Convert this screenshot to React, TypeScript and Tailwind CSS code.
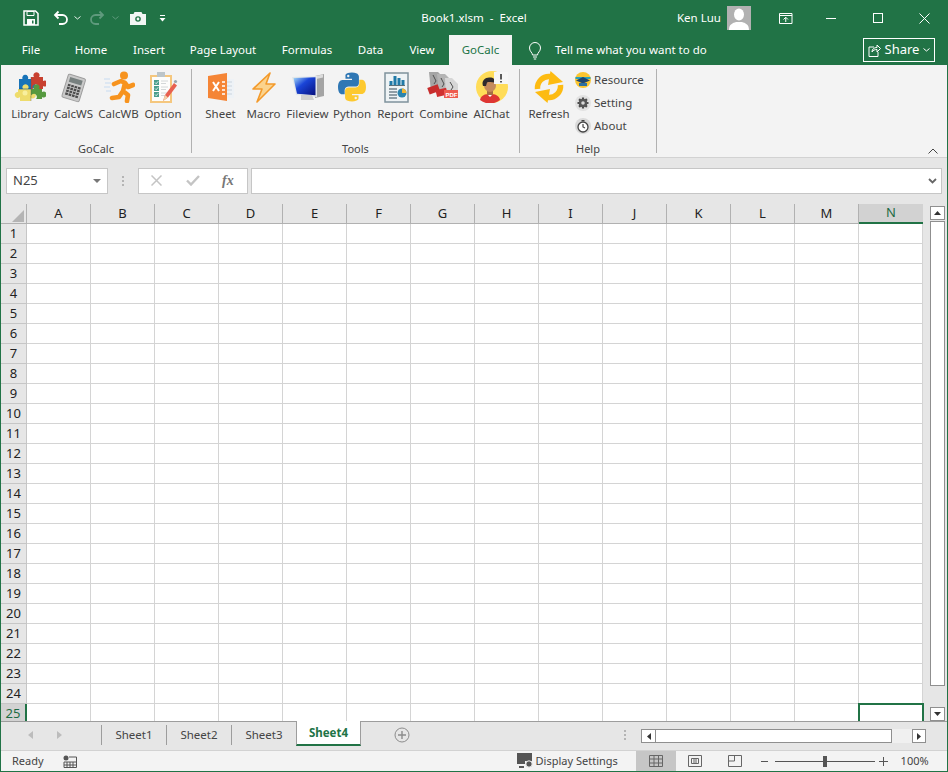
import type { ReactNode } from "react";

const font = "font-['Noto_Sans','Open_Sans',sans-serif]";

const tabs = [
  { label: "File", w: "w-[60px]" },
  { label: "Home", w: "w-[60px]" },
  { label: "Insert", w: "w-[56px]" },
  { label: "Page Layout", w: "w-[92px]" },
  { label: "Formulas", w: "w-[76px]" },
  { label: "Data", w: "w-[51px]" },
  { label: "View", w: "w-[52px]" },
];

const columns = ["A", "B", "C", "D", "E", "F", "G", "H", "I", "J", "K", "L", "M", "N"];
const rows = Array.from({ length: 25 }, (_, i) => i + 1);

function Icon({ children, size = 32 }: { children: ReactNode; size?: number }) {
  return (
    <svg width={size} height={size} viewBox={`0 0 ${size} ${size}`} fill="none" className="shrink-0">
      {children}
    </svg>
  );
}

const LibraryIcon = () => (
  <Icon>
    <path d="M5 8h3.500a3 3 0 1 1 5.500 0H17v4a3 3 0 1 1 0 5v1H5z" fill="#1773b8" />
    <path d="M17 6h3a3 3 0 1 1 5 0h4v4a3 3 0 1 1 0 5v3h-5a3 3 0 1 0-5 0h-2z" fill="#c8402f" />
    <path d="M4 18h5a3 3 0 1 1 5 0h3v4a3 3 0 1 1 0 5v3H6v-4a3 3 0 1 1-2-5z" fill="#eedc6c" />
    <path d="M17 18h3a3 3 0 1 1 5 0h3v3a3 3 0 1 1 0 5v2h-6a3 3 0 1 0-5-1z" fill="#56993f" />
    <path d="M5 18h12" stroke="#0c4f85" strokeWidth="0.600" />
    <path d="M17 6v24" stroke="#555" strokeWidth="0.400" />
    <circle cx="11" cy="22" r="2.500" fill="#f8ef9e" />
  </Icon>
);

const CalcWsIcon = () => (
  <Icon>
    <g transform="rotate(17 16 16)">
      <rect x="7" y="5" width="18" height="24" rx="1.500" fill="#c9c9c9" stroke="#9d9d9d" />
      <rect x="9.500" y="7.500" width="13" height="5" fill="#77807f" />
      {[14.5, 17.5, 20.5, 23.5].map((y) =>
        [9.5, 13, 16.5, 20].map((x) => (
          <rect key={`${x}-${y}`} x={x} y={y} width="2.700" height="2.200" fill="#4c4c4c" />
        )),
      )}
    </g>
  </Icon>
);

const CalcWbIcon = () => (
  <Icon>
    <path d="M1 8h6M2 12h6M1 16h6M3 20h5" stroke="#d6e4f2" strokeWidth="1.600" />
    <circle cx="21" cy="4.500" r="4" fill="#f7931e" />
    <path d="M11 13l7-3 4 2-2 8 5 4-1 6M20 20l-4 6-7 1M22 12l3 4 5-2" stroke="#f7931e" strokeWidth="4.600" strokeLinejoin="round" strokeLinecap="round" />
  </Icon>
);

const OptionIcon = () => (
  <Icon>
    <rect x="3" y="4" width="22" height="28" fill="#f5c77e" />
    <rect x="5" y="6" width="18" height="24" fill="#fdfdfb" />
    <rect x="10" y="1" width="8" height="5" fill="#bcc5c9" />
    {[9, 15, 21].map((y) => (
      <g key={y}>
        <rect x="7" y={y} width="5" height="5" fill="#4b9e8c" />
        <path d={`M8 ${y + 2.5}l1.200 1.200 2-2.400`} stroke="#fff" strokeWidth="0.800" />
        <path d={`M14 ${y + 1}h7M14 ${y + 3.5}h5`} stroke="#d4d8d8" />
      </g>
    ))}
    <path d="M16 30l2-6 9-12 3 2.500-9 12z" fill="#e8604f" />
    <path d="M16 30l2-6 3 2.500z" fill="#f1d2a8" />
    <circle cx="28.500" cy="10.500" r="1.600" fill="#9aa5ab" />
  </Icon>
);

const SheetIcon = () => (
  <Icon>
    <rect x="16" y="8" width="13" height="19" fill="#eef2f6" />
    <path d="M20 11h7M20 15h7M20 19h7M20 23h7" stroke="#d6dee6" strokeWidth="1.600" />
    <path d="M3 5l19-3v28L3 27z" fill="#f58536" />
    <path d="M8 11l6 9M14 11l-6 9" stroke="#fff" strokeWidth="2" />
    <path d="M17 11h3M17 15h3M17 19h3M17 23h3" stroke="#fff" strokeWidth="1.600" />
  </Icon>
);

const MacroIcon = () => (
  <Icon>
    <path d="M22 2L5 18h9l-5 13 18-18h-9z" fill="#fbd38d" stroke="#f39a2b" strokeWidth="1.600" strokeLinejoin="round" />
  </Icon>
);

const FileviewIcon = () => (
  <Icon>
    <defs>
      <linearGradient id="screen" x1="0" y1="0" x2="1" y2="1">
        <stop offset="0" stopColor="#a8dcf8" />
        <stop offset="0.4" stopColor="#1a45d8" />
        <stop offset="1" stopColor="#07107e" />
      </linearGradient>
    </defs>
    <path d="M23 5l9-2v22l-9 2z" fill="#a4a4a4" />
    <path d="M24 5l7-1.500v3L24 8z" fill="#dcdcdc" />
    <path d="M0 6l25-1v21L4 24z" fill="#e3e7ea" />
    <path d="M1.500 7l22-.7v18L5 22.700z" fill="url(#screen)" />
    <path d="M9 24h11l2 5H9z" fill="#cfcfcf" />
  </Icon>
);

const PythonIcon = () => (
  <Icon>
    <g transform="scale(1.333)">
      <path d="M11.900 1.200C6.800 1.200 7.100 3.500 7.100 3.500v2.400h4.900v.8H5.200S1.500 6.200 1.500 12s3.100 5.500 3.100 5.500h1.900v-2.700s-.1-3.100 3-3.100h5c2.800 0 2.700-2.700 2.700-2.700V4.400s.4-3.200-5.300-3.200zM9.200 2.800a.9.9 0 1 1 0 1.800.9.9 0 0 1 0-1.800z" fill="#2f77b4" />
      <path transform="rotate(180 12 12)" d="M11.900 1.200C6.800 1.200 7.100 3.500 7.100 3.500v2.400h4.900v.8H5.200S1.500 6.200 1.500 12s3.100 5.500 3.100 5.500h1.900v-2.700s-.1-3.100 3-3.100h5c2.800 0 2.700-2.700 2.700-2.700V4.400s.4-3.200-5.300-3.200zM9.200 2.800a.9.9 0 1 1 0 1.800.9.9 0 0 1 0-1.800z" fill="#fdc92f" />
    </g>
  </Icon>
);

const ReportIcon = () => (
  <Icon>
    <rect x="5" y="2" width="23" height="29" fill="#eef3f5" stroke="#7f929c" strokeWidth="1.500" />
    <path d="M11 14V10M15 14V5M19 14V7M23 14V9" stroke="#1f7aa8" strokeWidth="3" />
    <path d="M9 14.500h16" stroke="#5c6f78" />
    <path d="M9 18h8M9 21h8M9 24h8M9 27h8" stroke="#71838c" strokeWidth="1.300" />
    <circle cx="22" cy="22" r="4.500" fill="#2b85ae" />
    <path d="M22 22v-4.500a4.500 4.500 0 0 1 4.500 4.500z" fill="#f2b632" />
  </Icon>
);

const CombineIcon = () => (
  <Icon size={36}>
    <path d="M3 3h9l4 4v16H5z" fill="#a4a4a4" />
    <path d="M11 5h8l5 5v14H13z" fill="#b4b4b4" />
    <path d="M19 9h7l6 6v14H20z" fill="#d6d6d6" />
    <path d="M7 6l3 6-2 3M15 9l3 6-2 3M24 13l3 5-2 3" stroke="#4f4f4f" />
    <rect x="2" y="17" width="11" height="7" transform="rotate(-20 7 20)" fill="#c72d2d" />
    <rect x="10" y="20" width="11" height="7" transform="rotate(-14 15 23)" fill="#cf3030" />
    <rect x="18" y="21" width="14" height="8" fill="#ee5c4f" />
    <text x="19.500" y="27.500" fontSize="6" fill="#fff" fontFamily="Liberation Sans, sans-serif" fontWeight="700">PDF</text>
  </Icon>
);

const AiChatIcon = () => (
  <Icon>
    <circle cx="16" cy="16" r="16" fill="#ffdc58" />
    <path d="M4 29c1-5 5-6 10-6s9 1 10 6a16 16 0 0 1-20 0z" fill="#de3633" />
    <path d="M11 23l3 3 3-3z" fill="#fff" />
    <rect x="11" y="18" width="6" height="6" fill="#a76c45" />
    <ellipse cx="14" cy="14.500" rx="6" ry="6.500" fill="#c58a5c" />
    <path d="M7 15c-2-6 3-9 7-8.500 3 0 6 2 6 5-4 0-7-1-9 0l-1 3.500z" fill="#2e2a2d" />
    <rect x="18" y="1" width="14" height="12" fill="#f6f6f6" />
    <path d="M25 3v5.500M25 10v1.500" stroke="#333" strokeWidth="1.600" />
  </Icon>
);

const RefreshIcon = () => (
  <Icon>
    <path d="M4.500 18A11.500 11.500 0 0 1 17 5.500" stroke="#fdbb11" strokeWidth="5.500" />
    <path d="M17.500 0L30 11l-15 3z" fill="#fdbb11" />
    <path d="M27.500 14A11.500 11.500 0 0 1 15 26.500" stroke="#fdbb11" strokeWidth="5.500" />
    <path d="M14.500 32L2 21l15-3z" fill="#fdbb11" />
  </Icon>
);

const ResourceIcon = () => (
  <Icon size={16}>
    <circle cx="8" cy="8" r="8" fill="#fbc530" />
    <path d="M0.500 5h15v2h-15z" fill="#29a1bd" />
    <path d="M1 8.500L8 5l7 3.500-7 3z" fill="#20456e" />
    <path d="M4 11h8v3H4z" fill="#2e6f9f" />
  </Icon>
);

const SettingIcon = () => (
  <Icon size={16}>
    <circle cx="8" cy="8" r="8" fill="#e2e2e2" />
    <path d="M8 2.500v11M2.500 8h11M4.100 4.100l7.800 7.800M11.900 4.100l-7.800 7.800" stroke="#4c4c4c" strokeWidth="2.200" />
    <circle cx="8" cy="8" r="4.300" fill="#555" />
    <circle cx="8" cy="8" r="1.800" fill="#d8d8d8" />
  </Icon>
);

const AboutIcon = () => (
  <Icon size={16}>
    <circle cx="8" cy="8" r="8" fill="#dadada" />
    <circle cx="8" cy="9" r="5" fill="#fff" stroke="#444" strokeWidth="1.300" />
    <path d="M6.500 2.700h3M8 6v3l2 1" stroke="#444" strokeWidth="1.200" />
  </Icon>
);

function RibbonButton({ label, width, children }: { label: string; width: string; children: ReactNode }) {
  return (
    <div className={`${width} flex shrink-0 flex-col items-center`}>
      <div className="flex h-[36px] items-center justify-center">{children}</div>
      <div className="mt-[1px] whitespace-nowrap text-[11.5px] leading-[16px] text-[#444]">{label}</div>
    </div>
  );
}

function SmallButton({ label, children }: { label: string; children: ReactNode }) {
  return (
    <div className="flex h-[23px] items-center gap-[3px]">
      {children}
      <span className="text-[11.5px] text-[#444]">{label}</span>
    </div>
  );
}

function Group({ label, width, children }: { label: string; width: string; children: ReactNode }) {
  return (
    <div className={`${width} mb-[4px] flex shrink-0 flex-col border-r border-[#b1b1b1]`}>
      <div className="flex h-[70px] shrink-0 items-start">{children}</div>
      <div className="mt-[3px] h-[11px] text-center text-[11px] leading-[14px] text-[#444]">{label}</div>
    </div>
  );
}

function TitleBar() {
  return (
    <div className="flex h-[35px] shrink-0 items-center pt-[1px] text-white">
      <div className="flex w-[420px] items-center pl-[22px]">
        <svg width="16" height="16" viewBox="0 0 16 16" fill="none">
          <path d="M1 1h11.500L15 3.500V15H1z" stroke="#fff" strokeWidth="1.500" />
          <path d="M4 1.500h7v4H4z" stroke="#fff" />
          <rect x="4" y="9" width="8" height="6" fill="#fff" />
          <rect x="9" y="10.500" width="1.500" height="3" fill="#217346" />
        </svg>
        <svg width="16" height="16" viewBox="0 0 16 16" fill="none" className="ml-[14px]">
          <path d="M5.500 1.500L2 5l3.500 3.500M2 5h7.500a4 4 0 0 1 0 9H6" stroke="#fff" strokeWidth="1.800" />
        </svg>
        <svg width="7" height="4" viewBox="0 0 7 4" fill="none" className="ml-[5px]">
          <path d="M.5.500l3 2.500 3-2.500" stroke="#e8f0ec" />
        </svg>
        <svg width="16" height="16" viewBox="0 0 16 16" fill="none" className="ml-[8px]">
          <path d="M10.500 1.500L14 5l-3.500 3.500M14 5H6.500a4 4 0 0 0 0 9H10" stroke="#5f9a7d" strokeWidth="1.800" />
        </svg>
        <svg width="7" height="4" viewBox="0 0 7 4" fill="none" className="ml-[7px]">
          <path d="M.5.500l3 2.500 3-2.500" stroke="#5f9a7d" />
        </svg>
        <svg width="16" height="13" viewBox="0 0 16 13" fill="none" className="ml-[11px]">
          <path d="M0 2h3.500l1-2h7l1 2H16v11H0z" fill="#f2f6f4" />
          <circle cx="8" cy="7" r="2.800" fill="#217346" />
          <circle cx="8" cy="7" r="1.400" fill="#f2f6f4" />
        </svg>
        <svg width="7" height="7" viewBox="0 0 7 7" fill="none" className="ml-[13px]">
          <path d="M1 .500h5" stroke="#fff" />
          <path d="M.5 3h6L3.500 6.500z" fill="#fff" />
        </svg>
      </div>
      <div className="w-[106px] whitespace-pre text-center text-[11.5px]">Book1.xlsm  -  Excel</div>
      <div className="flex flex-1 items-center">
        <span className="ml-[150px] whitespace-nowrap text-[11.5px]">Ken Luu</span>
        <div className="ml-[6px] flex h-[24px] w-[24px] items-end justify-center overflow-hidden bg-[#b1b1b1]">
          <svg width="24" height="24" viewBox="0 0 24 24" fill="#fff">
            <ellipse cx="12" cy="8.500" rx="5" ry="6" />
            <path d="M2 24c0-6 4-7 7-8h6c3 1 7 2 7 8z" />
          </svg>
        </div>
        <svg width="14" height="11" viewBox="0 0 14 11" fill="none" className="ml-[28px]">
          <path d="M.5.500h12.500v10H.5zM.5 2.500h12.500M6.750 9V4.500M4.500 6.500l2.250-2.250L9 6.500" stroke="#fff" />
        </svg>
        <div className="ml-[33px] h-px w-[10px] bg-white" />
        <div className="ml-[37px] h-[10px] w-[10px] border border-white" />
        <svg width="11" height="11" viewBox="0 0 11 11" fill="none" className="ml-[36px]">
          <path d="M.5.500l10 10M10.500.500l-10 10" stroke="#fff" />
        </svg>
      </div>
    </div>
  );
}

function TabBar() {
  return (
    <div className="flex h-[30px] shrink-0 items-stretch text-[11.5px] text-white">
      {tabs.map((t) => (
        <div key={t.label} className={`${t.w} flex items-center justify-center`}>
          {t.label}
        </div>
      ))}
      <div className="ml-[1px] flex w-[63px] items-center justify-center bg-[#f3f3f3] text-[#217346]">GoCalc</div>
      <svg width="16" height="18" viewBox="0 0 16 18" fill="none" className="ml-[15px] mt-[7px]">
        <path d="M5.500 13c0-2.500-3-3.500-3-7a5.500 5.500 0 0 1 11 0c0 3.500-3 4.500-3 7zM6 15h4M6.800 17h2.400" stroke="#fff" />
      </svg>
      <div className="ml-[12px] flex items-center whitespace-nowrap">Tell me what you want to do</div>
      <div className="ml-auto mr-[12px] mt-[3px] flex h-[24px] w-[72px] items-center justify-center gap-[4px] border border-white text-[13px]">
        <svg width="13" height="13" viewBox="0 0 13 13" fill="none">
          <path d="M6 3H1v9.500h9V8M4 8c0-3 2-4.500 5-4.500V1l3.500 3.500L9 8V5.500C7 5.500 5 6 4 8z" stroke="#fff" />
        </svg>
        <span>Share</span>
        <svg width="7" height="4" viewBox="0 0 7 4" fill="none">
          <path d="M.5.500l3 2.500 3-2.500" stroke="#fff" />
        </svg>
      </div>
    </div>
  );
}

function Ribbon() {
  return (
    <div className="flex h-[93px] shrink-0 items-stretch border-b border-[#d2d2d2] bg-[#f3f3f3] pt-[4px]">
      <Group label="GoCalc" width="w-[191px]">
        <div className="w-[7px]" />
        <RibbonButton label="Library" width="w-[44px]"><LibraryIcon /></RibbonButton>
        <RibbonButton label="CalcWS" width="w-[43px]"><CalcWsIcon /></RibbonButton>
        <RibbonButton label="CalcWB" width="w-[47px]"><CalcWbIcon /></RibbonButton>
        <RibbonButton label="Option" width="w-[42px]"><OptionIcon /></RibbonButton>
      </Group>
      <Group label="Tools" width="w-[328px]">
        <div className="w-[7px]" />
        <RibbonButton label="Sheet" width="w-[43px]"><SheetIcon /></RibbonButton>
        <RibbonButton label="Macro" width="w-[43px]"><MacroIcon /></RibbonButton>
        <RibbonButton label="Fileview" width="w-[45px]"><FileviewIcon /></RibbonButton>
        <RibbonButton label="Python" width="w-[44px]"><PythonIcon /></RibbonButton>
        <RibbonButton label="Report" width="w-[43px]"><ReportIcon /></RibbonButton>
        <RibbonButton label="Combine" width="w-[53px]"><CombineIcon /></RibbonButton>
        <RibbonButton label="AIChat" width="w-[43px]"><AiChatIcon /></RibbonButton>
      </Group>
      <Group label="Help" width="w-[137px]">
        <div className="w-[8px]" />
        <RibbonButton label="Refresh" width="w-[42px]"><RefreshIcon /></RibbonButton>
        <div className="ml-[5px] mt-[-1px] flex flex-col">
          <SmallButton label="Resource"><ResourceIcon /></SmallButton>
          <SmallButton label="Setting"><SettingIcon /></SmallButton>
          <SmallButton label="About"><AboutIcon /></SmallButton>
        </div>
      </Group>
      <div className="flex flex-1 items-end justify-end pb-[3px] pr-[9px]">
        <svg width="10" height="6" viewBox="0 0 10 6" fill="none">
          <path d="M.5 5.500L5 1l4.500 4.500" stroke="#444" />
        </svg>
      </div>
    </div>
  );
}

function FormulaBar() {
  return (
    <div className="flex h-[46px] shrink-0 items-center bg-[#e6e6e6] pb-[1px] pl-[5px] pr-[5px]">
      <div className="flex h-[26px] w-[102px] items-center justify-between border border-[#c6c6c6] bg-white pl-[6px] pr-[6px] text-[13px] text-[#444]">
        <span>N25</span>
        <svg width="8" height="4" viewBox="0 0 8 4"><path d="M0 0h8L4 4z" fill="#777" /></svg>
      </div>
      <div className="ml-[14px] flex h-[10px] flex-col justify-between">
        {[0, 1, 2].map((i) => (
          <div key={i} className="h-[2px] w-[2px] bg-[#b4b4b4]" />
        ))}
      </div>
      <div className="ml-[14px] flex h-[26px] w-[110px] items-center border border-[#c6c6c6] bg-white">
        <svg width="11" height="11" viewBox="0 0 11 11" fill="none" className="ml-[12px]">
          <path d="M.5.500l10 10M10.500.500l-10 10" stroke="#c4c4c4" strokeWidth="1.500" />
        </svg>
        <svg width="14" height="11" viewBox="0 0 14 11" fill="none" className="ml-[24px]">
          <path d="M1 5.500l4 4 8-8.500" stroke="#c4c4c4" strokeWidth="2.400" />
        </svg>
        <span className="ml-[22px] font-['Liberation_Serif',serif] text-[14px] font-bold italic text-[#777]">fx</span>
      </div>
      <div className="ml-[3px] flex h-[26px] flex-1 items-center justify-end border border-[#c6c6c6] bg-white pr-[4px]">
        <svg width="9" height="6" viewBox="0 0 9 6" fill="none">
          <path d="M1 1l3.500 3.500L8 1" stroke="#666" strokeWidth="1.800" />
        </svg>
      </div>
    </div>
  );
}

function ColumnHeader() {
  return (
    <div className="flex h-[20px] bg-[#e6e6e6]">
      <div className="h-full w-[26px] shrink-0 border-r border-b border-[#b1b1b1]">
        <svg width="12" height="12" viewBox="0 0 12 12" className="ml-[11px] mt-[6px]">
          <path d="M12 0v12H0z" fill="#b4b4b4" />
        </svg>
      </div>
      {columns.map((c) => (
        <div
          key={c}
          className={
            c === "N"
              ? "flex w-[64px] items-center justify-center border-b-2 border-[#217346] bg-[#d2d2d2] text-[13px] text-[#1d6b44]"
              : "flex w-[64px] items-center justify-center border-r border-b border-[#b1b1b1] text-[13px] text-[#222]"
          }
        >
          {c}
        </div>
      ))}
    </div>
  );
}

function Sheet() {
  return (
    <div className="h-[497px] overflow-hidden">
      {rows.map((r) => (
        <div key={r} className="flex h-[20px]">
          <div
            className={
              r === 25
                ? "flex w-[26px] shrink-0 items-center justify-center border-r-2 border-[#217346] bg-[#d2d2d2] text-[13px] text-[#1d6b44]"
                : "flex w-[26px] shrink-0 items-center justify-center border-r border-b border-[#c6c6c6] bg-[#e6e6e6] text-[13px] text-[#222]"
            }
          >
            {r}
          </div>
          {columns.map((c) =>
            r === 25 && c === "N" ? (
              <div key={c} className="ml-[-1px] mt-[-1px] h-[21px] w-[66px] border-2 border-[#217346] bg-white" />
            ) : (
              <div key={c} className="h-[20px] w-[64px] border-r border-b border-[#d4d4d4] bg-white" />
            ),
          )}
        </div>
      ))}
    </div>
  );
}

function VScroll() {
  return (
    <div className="flex w-[22px] shrink-0 flex-col items-center bg-[#e6e6e6] pl-[2px] pt-[2px]">
      <div className="flex h-[14px] w-[15px] items-center justify-center border border-[#8f8f8f] bg-white">
        <svg width="7" height="4" viewBox="0 0 7 4"><path d="M3.500 0L7 4H0z" fill="#333" /></svg>
      </div>
      <div className="mt-[1px] h-[465px] w-[15px] border border-[#8f8f8f] bg-white" />
      <div className="flex-1" />
      <div className="flex h-[14px] w-[15px] items-center justify-center border border-[#8f8f8f] bg-white">
        <svg width="7" height="4" viewBox="0 0 7 4"><path d="M0 0h7L3.500 4z" fill="#333" /></svg>
      </div>
    </div>
  );
}

function SheetTabs() {
  return (
    <div className="flex h-[29px] shrink-0 items-start border-t border-[#9d9d9d] bg-[#e6e6e6] text-[11.5px]">
      <svg width="6" height="8" viewBox="0 0 6 8" className="ml-[27px] mt-[9px]"><path d="M5 0v8L0 4z" fill="#bcbcbc" /></svg>
      <svg width="6" height="8" viewBox="0 0 6 8" className="ml-[23px] mt-[9px]"><path d="M0 0v8l5-4z" fill="#bcbcbc" /></svg>
      <div className="ml-[38px] mt-[3px] flex h-[20px]">
        {["Sheet1", "Sheet2", "Sheet3"].map((s) => (
          <div key={s} className="flex w-[65px] items-center justify-center border-l border-[#9d9d9d] text-[#444]">
            {s}
          </div>
        ))}
      </div>
      <div className="mt-[-1px] flex h-[25px] w-[65px] items-center justify-center border-x border-b-2 border-x-[#9d9d9d] border-b-[#217346] bg-white font-bold text-[#217346]">
        Sheet4
      </div>
      <svg width="16" height="16" viewBox="0 0 16 16" fill="none" className="ml-[33px] mt-[5px]">
        <circle cx="8" cy="8" r="7" stroke="#8c8c8c" />
        <path d="M8 4v8M4 8h8" stroke="#8c8c8c" strokeWidth="1.400" />
      </svg>
      <div className="ml-[214px] mt-[8px] flex h-[10px] flex-col justify-between">
        {[0, 1, 2].map((i) => (
          <div key={i} className="h-[2px] w-[2px] bg-[#b4b4b4]" />
        ))}
      </div>
      <div className="ml-[15px] mt-[7px] flex h-[14px] items-stretch">
        <div className="flex w-[15px] items-center justify-center border border-[#8f8f8f] bg-white">
          <svg width="4" height="7" viewBox="0 0 4 7"><path d="M4 0v7L0 3.500z" fill="#333" /></svg>
        </div>
        <div className="w-[236px] border-y border-r border-[#8f8f8f] bg-white" />
        <div className="w-[20px] bg-[#f0f0f0]" />
        <div className="flex w-[14px] items-center justify-center border border-[#8f8f8f] bg-white">
          <svg width="4" height="7" viewBox="0 0 4 7"><path d="M0 0v7l4-3.500z" fill="#333" /></svg>
        </div>
      </div>
    </div>
  );
}

function StatusBar() {
  return (
    <div className="flex h-[21px] shrink-0 items-center border-t border-[#d2d2d2] bg-[#f3f3f3] text-[11px] text-[#444]">
      <span className="ml-[11px]">Ready</span>
      <svg width="14" height="13" viewBox="0 0 14 13" fill="none" className="ml-[19px]">
        <circle cx="3" cy="3" r="2.500" fill="#555" />
        <path d="M6 2h7.500v10.500H1V7h12M4 7v5.500M7 7v5.500M10 7v5.500M1 10h12" stroke="#555" />
      </svg>
      <svg width="17" height="16" viewBox="0 0 17 16" fill="none" className="ml-[440px]">
        <path d="M0 0h15v8H8v3H0z" fill="#555" />
        <circle cx="12" cy="11" r="3.200" fill="#555" stroke="#f3f3f3" />
        <path d="M2 14h5" stroke="#555" strokeWidth="2" />
      </svg>
      <span className="ml-[2px] w-[82px] whitespace-nowrap">Display Settings</span>
      <div className="ml-[18px] flex h-full w-[40px] items-center justify-center bg-[#c6c6c6]">
        <svg width="14" height="12" viewBox="0 0 14 12" fill="none">
          <path d="M.5.500h13v11H.5zM.5 4h13M.5 8h13M5 .500v11M9.500.500v11" stroke="#666" />
        </svg>
      </div>
      <svg width="14" height="12" viewBox="0 0 14 12" fill="none" className="ml-[12px]">
        <path d="M.5.500h13v11H.5zM3.500 3.500h7v5h-7zM5 5h4M5 7h4" stroke="#666" />
      </svg>
      <svg width="14" height="12" viewBox="0 0 14 12" fill="none" className="ml-[26px]">
        <path d="M.5 11.500V.500h13v11M.5 6h6V.500M13.500 11.500H.5" stroke="#666" />
      </svg>
      <div className="ml-[19px] h-px w-[7px] bg-[#555]" />
      <div className="relative ml-[7px] flex h-[10px] w-[100px] items-center justify-center">
        <div className="h-px w-full bg-[#555]" />
        <div className="absolute left-[48px] h-[11px] w-[4px] bg-[#555]" />
      </div>
      <svg width="9" height="9" viewBox="0 0 9 9" fill="none" className="ml-[4px]">
        <path d="M4.500 0v9M0 4.500h9" stroke="#555" />
      </svg>
      <span className="ml-[13px]">100%</span>
    </div>
  );
}

export default function App() {
  return (
    <div className={`${font} flex h-[772px] w-[948px] flex-col overflow-hidden border-x border-b border-[#217346] bg-[#217346]`}>
      <TitleBar />
      <TabBar />
      <Ribbon />
      <FormulaBar />
      <div className="flex h-[517px] shrink-0 bg-[#e6e6e6]">
        <div className="w-[924px] shrink-0 overflow-hidden">
          <ColumnHeader />
          <Sheet />
        </div>
        <VScroll />
      </div>
      <SheetTabs />
      <StatusBar />
    </div>
  );
}
